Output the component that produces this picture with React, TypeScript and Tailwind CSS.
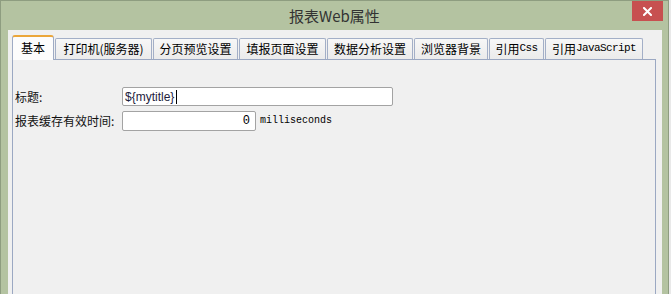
const cjk = "font-['Noto_Sans_CJK_SC','Noto_Sans',sans-serif]";
const mono = "font-['Liberation_Mono',monospace]";

const tabs = [
  { label: '打印机(服务器)', w: 'w-[97px]' },
  { label: '分页预览设置', w: 'w-[85px]' },
  { label: '填报页面设置', w: 'w-[87px]' },
  { label: '数据分析设置', w: 'w-[86px]' },
  { label: '浏览器背景', w: 'w-[74px]' },
  { label: '引用', latin: 'Css', w: 'w-[55px]' },
  { label: '引用', latin: 'JavaScript', w: 'w-[98px]' },
];

function CloseIcon() {
  return (
    <svg width="9" height="9" viewBox="0 0 9 9">
      <path d="M1 1L8 8M8 1L1 8" stroke="#fff" strokeWidth="2" strokeLinecap="square" />
    </svg>
  );
}

export default function App() {
  return (
    <div className="flex w-[671px] h-[294px] overflow-hidden bg-[#e9e9e9]">
      <div className="relative flex flex-col w-[669px] h-full bg-[#b4c3a1] border-l border-r border-t border-[#8e9d80]">
        <div className="h-[29px] flex items-center justify-center">
          <span className={`${cjk} text-[15px] leading-none text-[#333333]`}>报表Web属性</span>
        </div>
        <div className="absolute top-0 right-[5px] w-[31px] h-[20px] bg-[#c75050] flex items-center justify-center">
          <CloseIcon />
        </div>

        <div className="flex-1 flex flex-col ml-[7px] mr-[6px] bg-[#f0f0f0] pt-[5px] pl-[4px] pr-[6px]">
          <div className="relative z-10 flex items-end gap-[1px] h-[24px]">
            <div
              className={`${cjk} w-[42px] h-[25px] -mb-[1px] flex items-start justify-center pt-[4px] text-[12px] leading-[14px] text-black bg-[#fcfcfc] border-x border-[#9fabc4] border-t-2 border-t-[#eba63a] rounded-t-[3px]`}
            >
              基本
            </div>
            {tabs.map((t) => (
              <div
                key={t.label + (t.latin ?? '')}
                className={`${t.w} h-[21px] flex items-center justify-center text-[12px] leading-[14px] text-black bg-gradient-to-b from-[#f7f7f7] to-[#ebebeb] border-x border-t border-[#a3afc7] rounded-t-[2px]`}
              >
                <span className={cjk}>{t.label}</span>
                {t.latin && (
                  <span className={`${mono} text-[11px] tracking-[-0.6px] -translate-y-[1px]`}>{t.latin}</span>
                )}
              </div>
            ))}
          </div>

          <div className="flex-1 border-x border-t border-[#9ba8c2] bg-[#f0f0f0] pt-[27px] pl-[2px]">
            <div className="flex items-center h-[19px]">
              <div className={`${cjk} w-[107px] text-[12px] leading-none text-[#111]`}>标题:</div>
              <div className="w-[271px] h-[19px] flex items-center bg-white border border-[#a3a3a3] rounded-[2px] pl-[2px]">
                <span className="font-['Liberation_Sans',sans-serif] text-[12px] leading-none text-[#1d1d3d]">
                  {'${mytitle}'}
                </span>
                <span className="ml-[2px] w-[1px] h-[14px] bg-black" />
              </div>
            </div>
            <div className="flex items-center h-[20px] mt-[5px]">
              <div className={`${cjk} w-[107px] text-[12px] leading-none text-[#111]`}>报表缓存有效时间:</div>
              <div className="w-[134px] h-[20px] flex items-center justify-end bg-white border border-[#a3a3a3] rounded-[2px] pr-[5px]">
                <span className={`${mono} text-[12px] leading-none text-black`}>0</span>
              </div>
              <span className={`${mono} ml-[4px] text-[10px] leading-none text-black`}>milliseconds</span>
            </div>
          </div>
        </div>
      </div>
      <div className="w-[2px] h-full bg-[#e9e9e9]" />
    </div>
  );
}
